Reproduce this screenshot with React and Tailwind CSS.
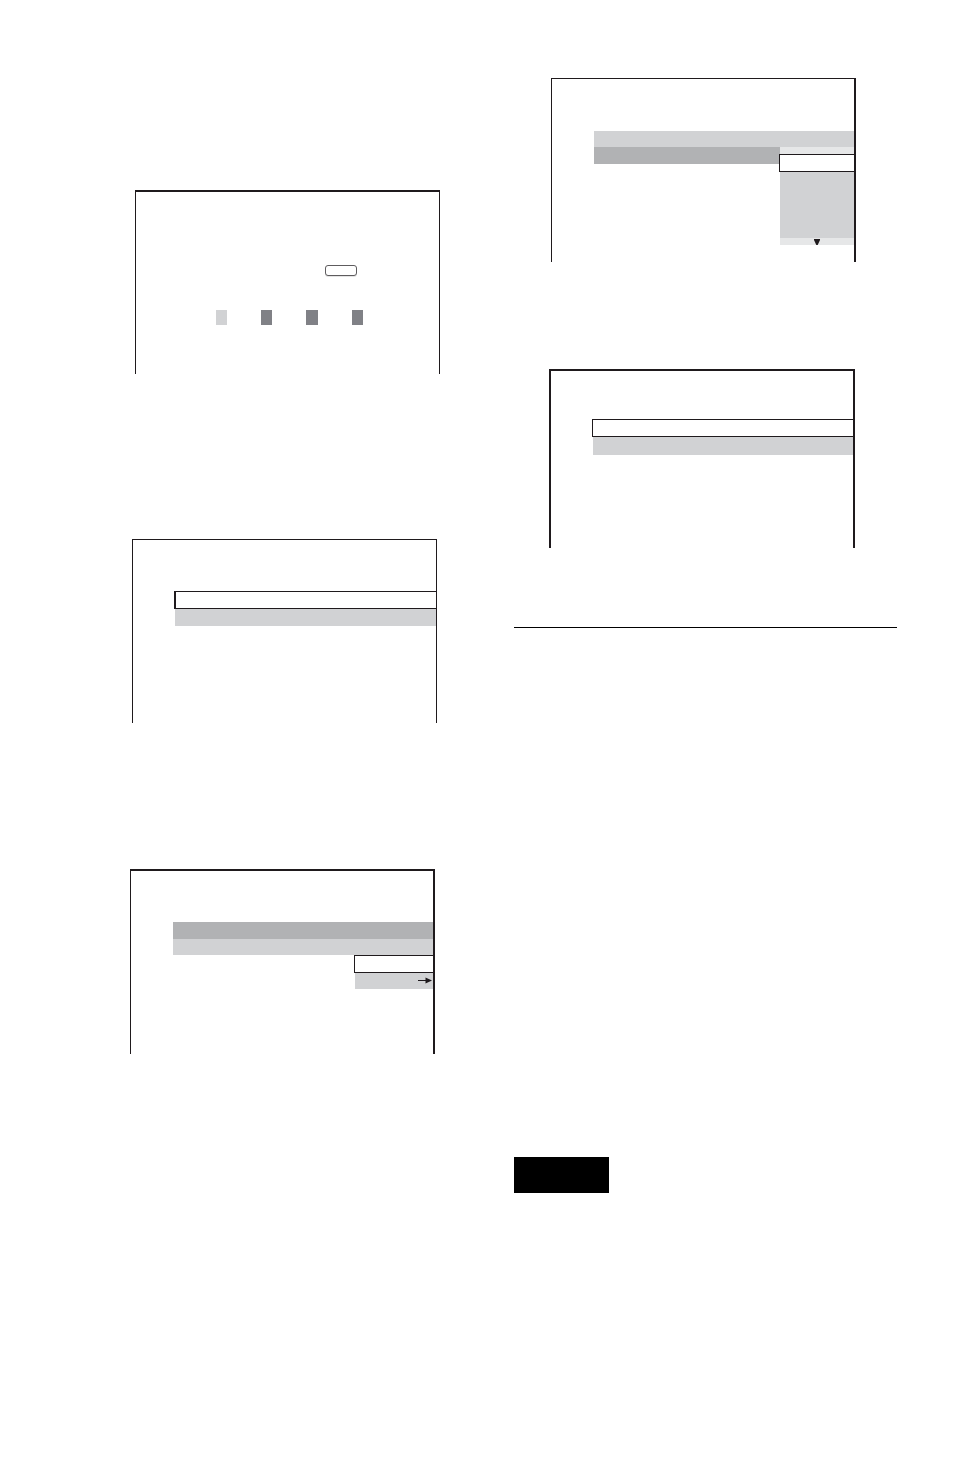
import React from "react";
import clsx from "clsx";

const swatches = [
  { id: "first", className: "w-[11px] bg-[#d1d2d4]" },
  { id: "second", className: "w-[11px] bg-[#808186]" },
  { id: "third", className: "w-3 bg-[#808186]" },
  { id: "fourth", className: "w-[11px] bg-[#808186]" },
];

// TV screen outline, open at the bottom
const Screen = ({ className, children }) => (
  <section
    className={clsx("w-full max-w-[305px] border-[#1f1a1d]", className)}
  >
    {children}
  </section>
);

const SelectedRow = ({ className }) => (
  <li
    className={clsx(
      "h-[18px] border-y border-l border-[#1f1a1d] bg-white",
      className
    )}
  />
);

const ArrowRight = () => (
  <svg width="14" height="7" viewBox="0 0 14 7" aria-hidden="true">
    <path d="M0 3h9v1H0z" fill="#1f1a1d" />
    <path d="M7.5 0.5 14 3.5 7.5 6.5z" fill="#1f1a1d" />
  </svg>
);

const ArrowDown = () => (
  <svg width="6" height="6" viewBox="0 0 6 6" aria-hidden="true">
    <path d="M0 0h6v1L3.7 6H2.3L0 1z" fill="#1f1a1d" />
  </svg>
);

const KeyScreen = () => (
  <Screen className="ml-5 h-[184px] border-x border-t-2 pt-[73px]">
    <div className="flex justify-end pr-[82px]">
      <button
        type="button"
        aria-label="Enter"
        className="h-[11px] w-8 rounded-[3px] border border-[#5e5c5e] bg-white shadow-[0_1px_0_#e4e4e4]"
      />
    </div>
    <div className="mt-[34px] ml-20 flex gap-[34px]">
      {swatches.map((swatch) => (
        <span key={swatch.id} className={clsx("h-[15px]", swatch.className)} />
      ))}
    </div>
  </Screen>
);

const LanguageScreen = () => (
  <Screen className="ml-[37px] h-[184px] border-t border-r-2 border-l pt-[52px] pl-[42px]">
    <div className="h-4 bg-[#d1d2d4]" />
    <div className="flex items-start">
      <div className="h-[17px] flex-1 bg-[#b1b2b4]" />
      <ul className="w-[74px]">
        <li className="h-[7px] bg-[#e6e7e8]" />
        <SelectedRow className="-ml-px" />
        <li className="h-[66px] bg-[#d1d2d4]" />
        <li className="flex h-[7px] items-end justify-center bg-[#e6e7e8]">
          <ArrowDown />
        </li>
      </ul>
    </div>
  </Screen>
);

const App = () => {
  return (
    <main className="grid min-h-screen grid-cols-2 items-start gap-4 bg-white pr-[57px] pl-[115px]">
      <div className="pt-[190px]">
        <KeyScreen />

        <Screen className="mt-[165px] ml-[17px] h-[184px] border-x border-t pt-[51px] pl-[41px]">
          <ul>
            <SelectedRow className="border-l-2" />
            <li className="ml-px h-[17px] bg-[#d1d2d4]" />
          </ul>
        </Screen>

        <Screen className="mt-[146px] ml-[15px] h-[185px] border-t-2 border-r-2 border-l pt-[51px] pl-[42px]">
          <div className="h-[17px] bg-[#b1b2b4]" />
          <div className="h-4 bg-[#d1d2d4]" />
          {/* Submenu */}
          <ul className="ml-auto w-[79px]">
            <SelectedRow />
            <li className="ml-px flex h-4 items-start justify-end bg-[#d1d2d4] pt-1 pr-px">
              <ArrowRight />
            </li>
          </ul>
        </Screen>
      </div>

      <div className="pt-[78px]">
        <LanguageScreen />

        <Screen className="mt-[107px] ml-[35px] h-[179px] max-w-[306px] border-x-2 border-t-2 pt-12 pl-[41px]">
          <ul>
            <SelectedRow />
            <li className="ml-px h-[18px] bg-[#d1d2d4]" />
          </ul>
        </Screen>

        <hr className="mt-[79px] border-t border-black" />
        <div className="mt-[529px] h-9 w-[95px] bg-black" />
      </div>
    </main>
  );
};

export default App;
